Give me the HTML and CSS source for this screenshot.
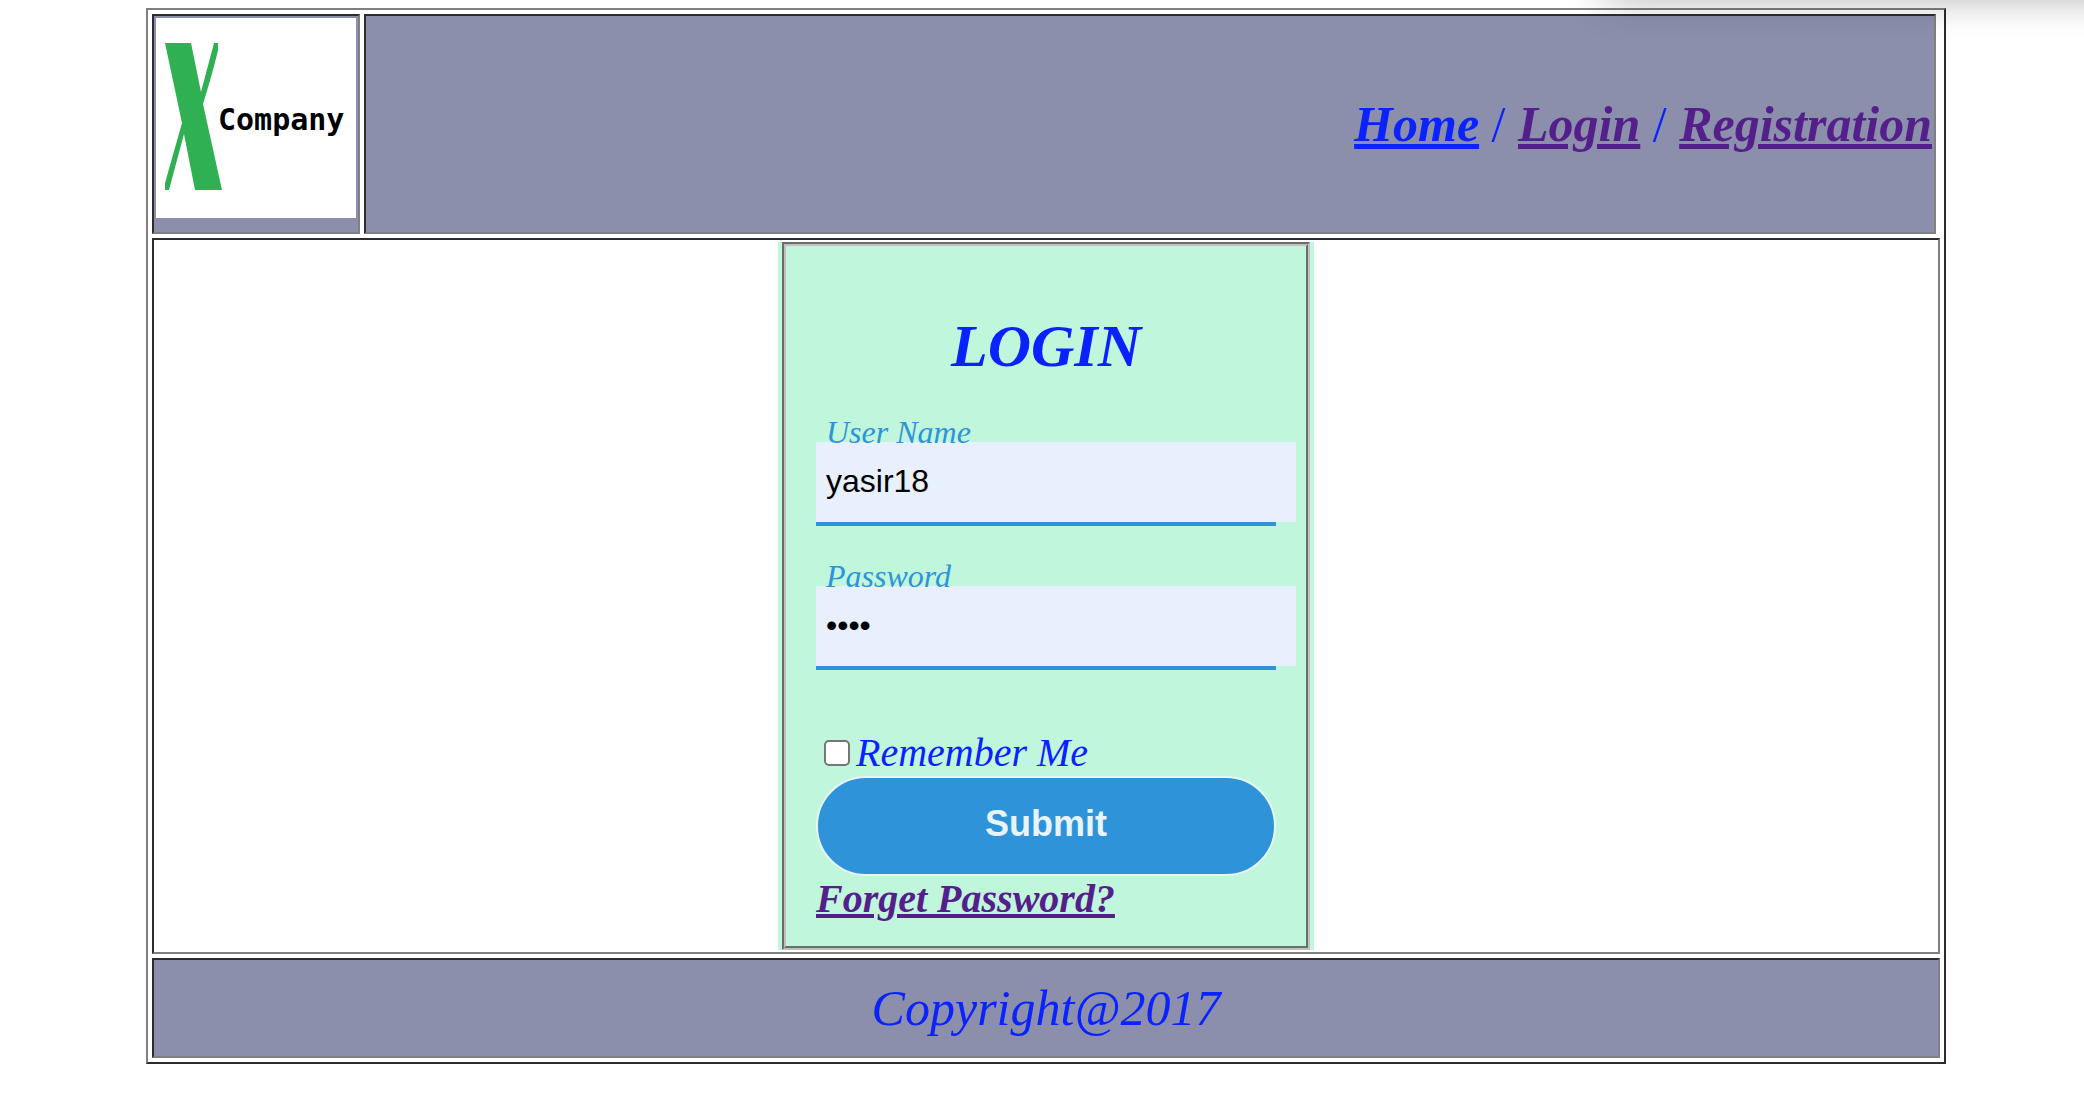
FILE: index.html
```html
<!DOCTYPE html>
<html lang="en">
<head>
<meta charset="utf-8">
<title>XCompany - Login</title>
<link rel="stylesheet" href="styles.css">
</head>
<body>
<div class="page">
  <header class="header">
    <div class="cell tinted logo-cell">
      <svg class="logo" viewBox="0 0 200 200" role="img" aria-label="XCompany">
        <rect width="200" height="200" fill="#fff"/>
        <path fill="#2eb053" d="M9 25H35L45 74L58 25H62V32Q58 50 47 86L66 172H39L28 116L13 172H9V165L26 105Z"/>
        <text class="logo-text" x="62" y="112">Company</text>
      </svg>
    </div>
    <nav class="cell tinted nav">
      <a class="link fresh" href="#home">Home</a> <span class="slash">/</span> <a class="link" href="#login">Login</a> <span class="slash">/</span> <a class="link" href="#registration">Registration</a>
    </nav>
  </header>
  <main class="cell main">
    <form class="login">
      <fieldset class="panel">
        <h1 class="title">LOGIN</h1>
        <div class="field">
          <label class="label" for="username">User Name</label>
          <input class="input" type="text" id="username" value="yasir18">
        </div>
        <div class="field">
          <label class="label" for="password">Password</label>
          <input class="input" type="password" id="password" value="1234">
        </div>
        <div class="remember">
          <input class="check" type="checkbox" id="remember">
          <label for="remember">Remember Me</label>
        </div>
        <button class="submit" type="button">Submit</button>
        <a class="link forgot" href="#forgot">Forget Password?</a>
      </fieldset>
    </form>
  </main>
  <footer class="cell tinted footer">Copyright@2017</footer>
</div>
</body>
</html>
```
FILE: styles.css
```css
* {
  box-sizing: border-box;
}

body {
  margin: 0;
  padding: 8px 0 8px 8px;
  position: relative;
  overflow-x: hidden;
  background: #fff;
  color: #0a22ff;
  font-family: "Liberation Serif", "Times New Roman", serif;
  font-style: italic;
}

/* soft shade falling from above the top right corner */
body::after {
  content: "";
  position: absolute;
  top: -40px;
  left: 77%;
  right: -60px;
  height: 36px;
  box-shadow: 0 0 40px rgba(0, 0, 0, 0.35);
  pointer-events: none;
}

.page {
  display: flex;
  flex-direction: column;
  gap: 4px;
  max-width: 1800px;
  margin: 0 auto;
  padding: 4px;
  border: 2px solid;
  border-color: #808080 #2c2c2c #2c2c2c #808080;
}

.cell {
  padding: 2px;
  border: 2px solid;
  border-color: #2c2c2c #808080 #808080 #2c2c2c;
}

.tinted {
  background: #8b8fab;
}

.header {
  display: flex;
  gap: 4px;
  padding-right: 4px;
}

.logo-cell {
  padding-bottom: 14px;
}

.logo {
  display: block;
  width: 200px;
  height: 200px;
}

.logo-text {
  fill: #000;
  font: bold 30px "DejaVu Sans Mono", monospace;
}

.nav {
  flex: 1;
  align-content: center;
  text-align: right;
  font-size: 50px;
}

.slash {
  font-style: normal;
}

.link {
  color: #551f8b;
  font-weight: bold;
}

.fresh {
  color: #0a22ff;
}

.main {
  display: flex;
  justify-content: center;
}

.login {
  width: 536px;
  padding: 0 4px;
  background: #c0f6dc;
}

.panel {
  margin: 0;
  padding: 66px 30px 24px;
  border: 4px groove #c0c0c0;
}

.title {
  margin: 0 0 34px;
  font-size: 60px;
  line-height: 68px;
  text-align: center;
}

.field {
  margin-bottom: 32px;
  border-bottom: 4px solid #2f93d9;
}

.label {
  display: block;
  position: relative;
  margin-bottom: -8px;
  padding-left: 10px;
  color: #2f93d9;
  font-size: 32px;
  line-height: 36px;
}

.input {
  display: block;
  width: calc(100% + 20px);
  height: 80px;
  padding: 0 10px 2px;
  border: 0;
  background: #e8effd;
  color: #000;
  font: 32px "Liberation Sans", Arial, sans-serif;
}

.remember {
  display: flex;
  align-items: center;
  gap: 6px;
  margin-top: 60px;
  padding-left: 8px;
  font-size: 40px;
  line-height: 46px;
}

.check {
  appearance: none;
  width: 26px;
  height: 26px;
  margin: 0;
  border: 2px solid #767676;
  border-radius: 5px;
  background: #fff;
}

.check:checked {
  background: #2f93d9;
}

.submit {
  display: block;
  width: 100%;
  height: 100px;
  padding: 0 0 4px;
  border: 2px solid #e8f4fc;
  border-radius: 50px;
  background: #2f93d9;
  color: #e8f4fc;
  font: bold 36px "Liberation Sans", Arial, sans-serif;
}

.forgot {
  display: block;
  font-size: 40px;
  line-height: 46px;
}

.footer {
  padding: 20px 2px;
  font-size: 50px;
  line-height: 56px;
  text-align: center;
}
```
